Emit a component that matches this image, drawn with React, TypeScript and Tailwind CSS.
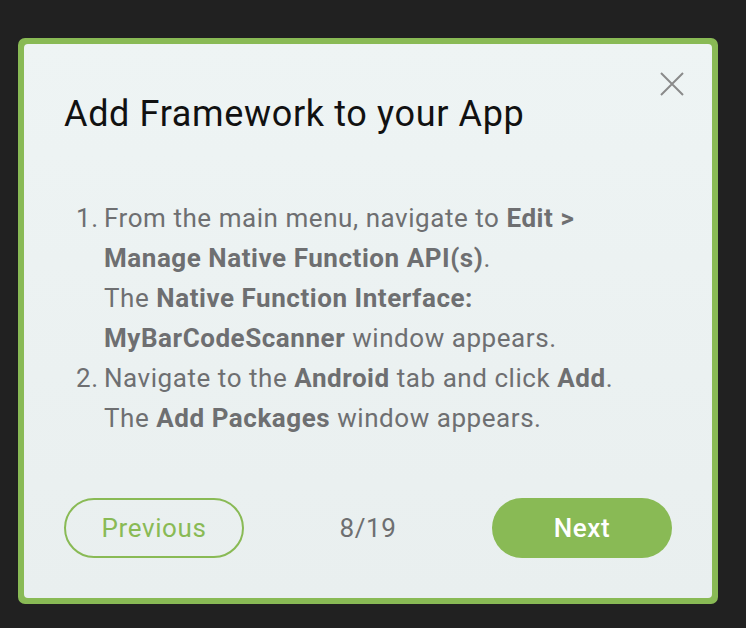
import React from "react";

export default function App() {
  return (
    <div
      className="w-[746px] h-[628px] bg-[#212121] pt-[38px] pl-[18px]"
      style={{ fontFamily: "Roboto, 'Noto Sans', sans-serif" }}
    >
      <div className="w-[700px] h-[566px] rounded-[7px] bg-[#89ba55] p-[6px]">
        <div className="flex h-full flex-col rounded-[4px] bg-gradient-to-b from-[#eef4f4] to-[#e9efef] px-[40px]">
          <div className="flex items-start justify-between">
            <h1 className="mt-[48px] text-[36px] leading-[44px] tracking-[0.65px] text-[#111111]">
              Add Framework to your App
            </h1>
            <button className="mt-[28px] -mr-[12px] h-[24px] w-[24px] text-[#8a8a8a]" aria-label="Close">
              <svg viewBox="0 0 24 24" className="h-[24px] w-[24px]" fill="none" stroke="currentColor" strokeWidth="2">
                <path d="M1 1 L23 23 M23 1 L1 23" />
              </svg>
            </button>
          </div>
          <ol className="mt-[62px] text-[26px] leading-[40px] tracking-[0.55px] text-[#6e6f71]">
            <li className="flex">
              <span className="w-[40px] pl-[12px] shrink-0">1.</span>
              <div>
                From the main menu, navigate to <b>Edit &gt;</b>
                <br />
                <b>Manage Native Function API(s)</b>.
                <br />
                The <b>Native Function Interface:</b>
                <br />
                <b>MyBarCodeScanner</b> window appears.
              </div>
            </li>
            <li className="flex">
              <span className="w-[40px] pl-[12px] shrink-0">2.</span>
              <div>
                Navigate to the <b>Android</b> tab and click <b>Add</b>.
                <br />
                The <b>Add Packages</b> window appears.
              </div>
            </li>
          </ol>
          <div className="mt-auto mb-[40px] flex items-center justify-between">
            <button className="h-[60px] w-[180px] rounded-full border-2 border-[#89ba55] text-[26px] tracking-[0.6px] text-[#89ba55]">
              Previous
            </button>
            <span className="text-[26px] tracking-[0.6px] text-[#6e6f71]">8/19</span>
            <button className="h-[60px] w-[180px] rounded-full bg-[#89ba55] text-[26px] tracking-[0.6px] font-medium text-white">
              Next
            </button>
          </div>
        </div>
      </div>
    </div>
  );
}
